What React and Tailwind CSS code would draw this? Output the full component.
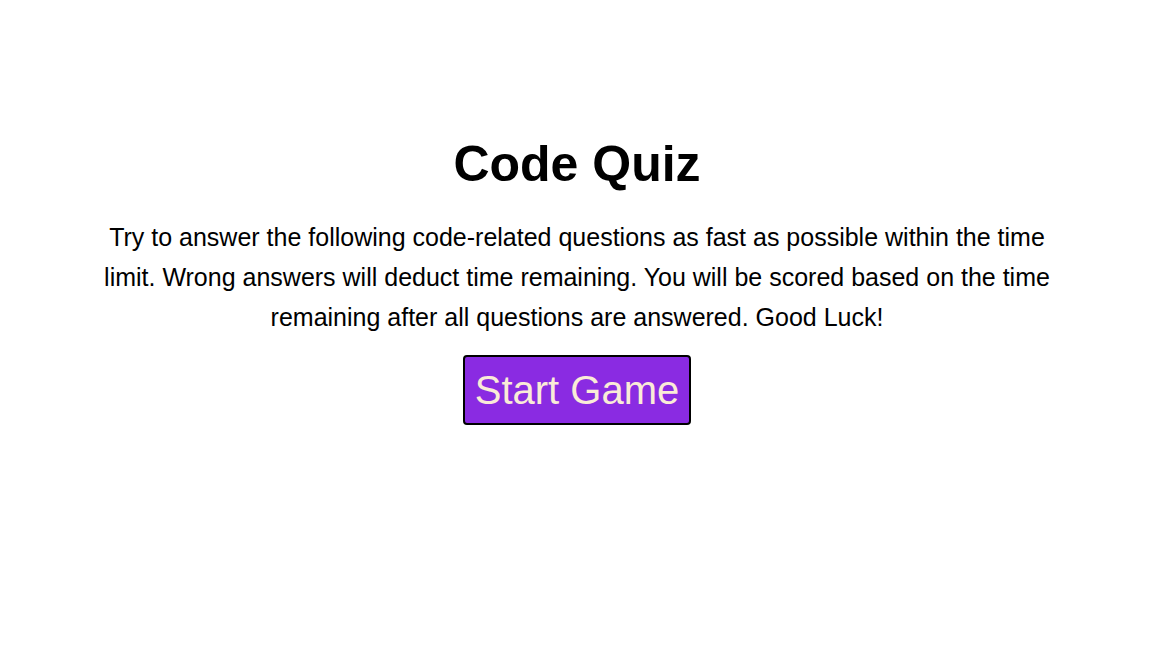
export default function App() {
    return (
        <div className="min-h-screen bg-white font-['Liberation_Sans',Arial,sans-serif] text-black">
            <div className="flex flex-col items-center pt-[132px] px-[90px] text-center">
                <h1 className="text-[50px] font-bold leading-[64px]">Code Quiz</h1>
                <p className="mt-[21px] text-[25px] leading-[40px] max-w-[965px]">
                    Try to answer the following code-related questions as fast as possible within the time limit. Wrong answers will deduct time remaining. You will be scored based on the time remaining after all questions are answered. Good Luck!
                </p>
                <button className="mt-[18px] bg-[#8a2be2] text-[#faebd7] text-[40px] leading-[46px] px-[10px] py-[10px] border-2 border-black rounded-[4px]">
                    Start Game
                </button>
            </div>
        </div>
    );
}
